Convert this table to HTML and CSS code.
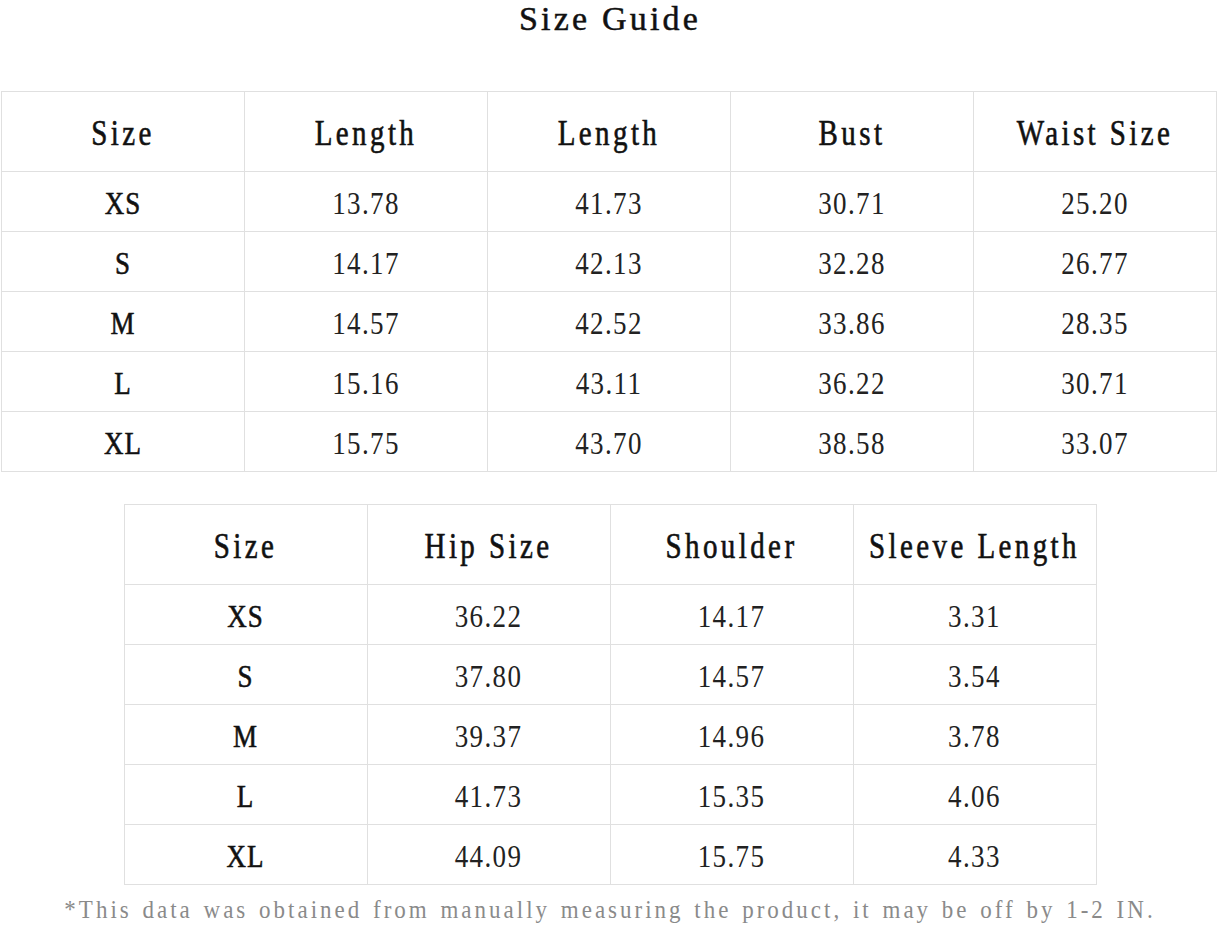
FILE: index.html
```html
<!DOCTYPE html>
<html>
<head>
<meta charset="utf-8">
<link rel="stylesheet" href="styles.css">
</head>
<body>
<h1 class="title">Size Guide</h1>
<table class="grid grid-wide">
  <tr class="head"><td><span class="tall">Size</span></td><td><span class="tall">Length</span></td><td><span class="tall">Length</span></td><td><span class="tall">Bust</span></td><td><span class="tall">Waist Size</span></td></tr>
  <tr><td class="sz"><span class="tall">XS</span></td><td><span class="tall">13.78</span></td><td><span class="tall">41.73</span></td><td><span class="tall">30.71</span></td><td><span class="tall">25.20</span></td></tr>
  <tr><td class="sz"><span class="tall">S</span></td><td><span class="tall">14.17</span></td><td><span class="tall">42.13</span></td><td><span class="tall">32.28</span></td><td><span class="tall">26.77</span></td></tr>
  <tr><td class="sz"><span class="tall">M</span></td><td><span class="tall">14.57</span></td><td><span class="tall">42.52</span></td><td><span class="tall">33.86</span></td><td><span class="tall">28.35</span></td></tr>
  <tr><td class="sz"><span class="tall">L</span></td><td><span class="tall">15.16</span></td><td><span class="tall">43.11</span></td><td><span class="tall">36.22</span></td><td><span class="tall">30.71</span></td></tr>
  <tr><td class="sz"><span class="tall">XL</span></td><td><span class="tall">15.75</span></td><td><span class="tall">43.70</span></td><td><span class="tall">38.58</span></td><td><span class="tall">33.07</span></td></tr>
</table>
<table class="grid grid-narrow">
  <tr class="head"><td><span class="tall">Size</span></td><td><span class="tall">Hip Size</span></td><td><span class="tall">Shoulder</span></td><td><span class="tall">Sleeve Length</span></td></tr>
  <tr><td class="sz"><span class="tall">XS</span></td><td><span class="tall">36.22</span></td><td><span class="tall">14.17</span></td><td><span class="tall">3.31</span></td></tr>
  <tr><td class="sz"><span class="tall">S</span></td><td><span class="tall">37.80</span></td><td><span class="tall">14.57</span></td><td><span class="tall">3.54</span></td></tr>
  <tr><td class="sz"><span class="tall">M</span></td><td><span class="tall">39.37</span></td><td><span class="tall">14.96</span></td><td><span class="tall">3.78</span></td></tr>
  <tr><td class="sz"><span class="tall">L</span></td><td><span class="tall">41.73</span></td><td><span class="tall">15.35</span></td><td><span class="tall">4.06</span></td></tr>
  <tr><td class="sz"><span class="tall">XL</span></td><td><span class="tall">44.09</span></td><td><span class="tall">15.75</span></td><td><span class="tall">4.33</span></td></tr>
</table>
<p class="note"><span class="tall">*This data was obtained from manually measuring the product, it may be off by 1-2 IN.</span></p>
</body>
</html>
```
FILE: styles.css
```css
html, body {
  margin: 0;
  padding: 0;
  background: #ffffff;
}
body {
  font-family: "Liberation Serif", "DejaVu Serif", serif;
  color: #1e1e1e;
}
.tall {
  display: inline-block;
  line-height: 1;
  transform: translateY(2px) scaleY(1.2);
}
.title {
  margin: 0;
  height: 36px;
  line-height: 38px;
  font-size: 34px;
  letter-spacing: 3.2px;
  font-weight: normal;
  text-align: center;
  color: #111;
  -webkit-text-stroke: 0.5px #111;
}
.grid {
  border-collapse: collapse;
  margin-left: auto;
  margin-right: auto;
  table-layout: fixed;
}
.grid td {
  border: 1px solid #e0e0e0;
  width: 242px;
  height: 59px;
  padding: 0;
  text-align: center;
  vertical-align: middle;
  font-size: 27px;
  letter-spacing: 1.4px;
  color: #222;
}
.grid .head td {
  height: 79px;
  font-size: 29px;
  letter-spacing: 3.4px;
  color: #111;
  -webkit-text-stroke: 0.5px #111;
}
.grid td.sz {
  font-size: 27px;
  letter-spacing: 1px;
  color: #111;
  -webkit-text-stroke: 0.5px #111;
}
.grid-wide {
  margin-top: 55px;
  position: relative;
  left: -1px;
}
.grid-narrow {
  margin-top: 32px;
}
.note {
  margin: 12px 0 0;
  text-align: center;
  font-size: 23px;
  letter-spacing: 3px;
  word-spacing: 2px;
  color: #8a8a8a;
  white-space: nowrap;
}
.note .tall {
  transform: translateY(0) scaleY(1.1);
}
```
